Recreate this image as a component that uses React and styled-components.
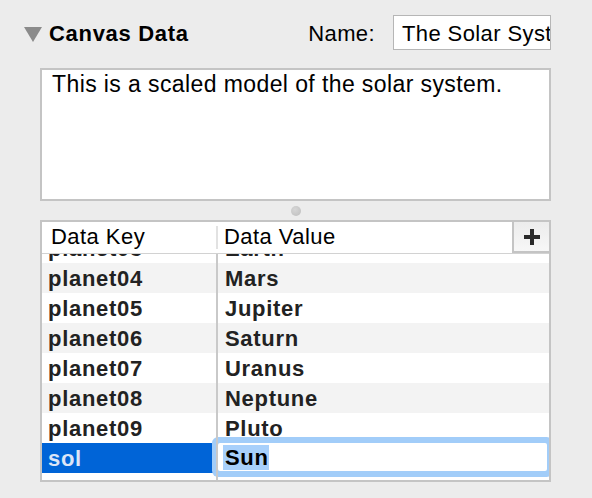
import React from "react";
import styled, { createGlobalStyle } from "styled-components";

const Global = createGlobalStyle`
  html, body { margin: 0; padding: 0; background: #ececec; }
  body { font-family: "Liberation Sans", Arial, Helvetica, sans-serif; }
  * { box-sizing: border-box; }
`;

const Page = styled.div`
  width: 592px;
  height: 498px;
  padding: 15px 41px 0 24px;
  background: #ececec;
`;

const HeaderRow = styled.div`
  display: flex;
  align-items: center;
  height: 35px;
`;

const Disclosure = styled.svg`
  width: 18px;
  height: 15px;
  margin-right: 7px;
  margin-top: 3px;
  flex: none;
`;

const Title = styled.div`
  font-weight: bold;
  font-size: 22px;
  letter-spacing: 0.7px;
  color: #000;
  margin-top: 3px;
`;

const Spacer = styled.div`
  flex: 1;
`;

const NameLabel = styled.div`
  font-size: 22px;
  letter-spacing: 0.4px;
  color: #000;
  margin-right: 18px;
  margin-top: 3px;
`;

const NameField = styled.div`
  width: 158px;
  height: 35px;
  border: 1px solid #b6b6b6;
  background: #fff;
  font-size: 22px;
  letter-spacing: 0.4px;
  line-height: 33px;
  padding: 1px 0 0 8px;
  white-space: nowrap;
  overflow: hidden;
  color: #000;
`;

const Description = styled.div`
  margin: 18px 0 0 16px;
  height: 133px;
  border: 2px solid #c4c4c4;
  background: #fff;
  font-size: 23px;
  letter-spacing: 0.4px;
  line-height: 28px;
  padding: 0 10px;
  color: #000;
`;

const Splitter = styled.div`
  margin-left: 16px;
  height: 19px;
  display: flex;
  align-items: center;
  justify-content: center;
`;

const SplitDot = styled.div`
  width: 10px;
  height: 10px;
  border-radius: 50%;
  background: radial-gradient(circle at 40% 35%, #d6d6d6, #bdbdbd);
  margin-top: 1px;
`;

const Table = styled.div`
  margin-left: 16px;
  height: 262px;
  border: 2px solid #c4c4c4;
  background: #fff;
  display: flex;
  flex-direction: column;
  position: relative;
`;

const TableHead = styled.div`
  display: grid;
  grid-template-columns: 174px 1fr 37px;
  height: 32px;
  border-bottom: 1px solid #d2d2d2;
  flex: none;
  position: relative;
  z-index: 3;
  background: #fff;
`;

const HeadCell = styled.div`
  font-size: 22px;
  letter-spacing: 0.45px;
  line-height: 30px;
  padding-left: ${p => p.$pad}px;
  color: #000;
  position: relative;
  ${p => p.$divider && `
    &::after {
      content: "";
      position: absolute;
      right: -2px;
      top: 4px;
      bottom: 4px;
      width: 2px;
      background: #e2e2e2;
    }
  `}
`;

const AddButton = styled.div`
  margin: -2px -2px 0 0;
  height: 33px;
  border: 2px solid #c4c4c4;
  background: linear-gradient(#ececec, #f7f7f7);
  display: flex;
  align-items: center;
  justify-content: center;
`;

const TableBody = styled.div`
  flex: 1;
  overflow: hidden;
  position: relative;
  &::after {
    content: "";
    position: absolute;
    left: 174px;
    top: 0;
    bottom: 0;
    width: 2px;
    background: #c9c9c9;
    z-index: 2;
  }
`;

const Rows = styled.div`
  margin-top: -21px;
`;

const Row = styled.div`
  display: grid;
  grid-template-columns: 176px 1fr;
  height: 30px;
  background: ${p => (p.$alt ? "#f3f3f3" : "#fff")};
  position: relative;
`;

const Cell = styled.div`
  font-size: 22px;
  font-weight: bold;
  letter-spacing: 0.7px;
  line-height: 29px;
  padding-top: 1px;
  color: ${p => (p.$selected ? "#dce5f7" : "#222")};
  background: ${p => (p.$selected ? "#0064d7" : "transparent")};
  padding-left: ${p => p.$pad}px;
  white-space: nowrap;
  overflow: hidden;
`;

const KeyCell = styled(Cell)`
  width: 174px;
`;

const EditField = styled.div`
  height: 28px;
  margin: 0 2px 0 0;
  background: #fff;
  border-radius: 2px;
  box-shadow: 0 0 0 6px #a2cdf9;
  font-size: 22px;
  font-weight: bold;
  letter-spacing: 0.7px;
  line-height: 28px;
  padding: 1px 0 0 5px;
  color: #000;
  position: relative;
  z-index: 1;
`;

const Highlight = styled.span`
  background: #a8d0fb;
  padding-left: 2px;
`;

const rows = [
  ["planet03", "Earth"],
  ["planet04", "Mars"],
  ["planet05", "Jupiter"],
  ["planet06", "Saturn"],
  ["planet07", "Uranus"],
  ["planet08", "Neptune"],
  ["planet09", "Pluto"],
];

export default function App() {
  return (
    <>
      <Global />
      <Page>
        <HeaderRow>
          <Disclosure viewBox="0 0 18 15">
            <polygon points="0,0 18,0 9,15" fill="#8b8b8b" />
          </Disclosure>
          <Title>Canvas Data</Title>
          <Spacer />
          <NameLabel>Name:</NameLabel>
          <NameField>The Solar System</NameField>
        </HeaderRow>
        <Description>This is a scaled model of the solar system.</Description>
        <Splitter>
          <SplitDot />
        </Splitter>
        <Table>
          <TableHead>
            <HeadCell $pad={9} $divider>Data Key</HeadCell>
            <HeadCell $pad={8}>Data Value</HeadCell>
            <AddButton>
              <svg width="16" height="16" viewBox="0 0 16 16">
                <rect x="0" y="6" width="16" height="4" fill="#2a2a2a" />
                <rect x="6" y="0" width="4" height="16" fill="#2a2a2a" />
              </svg>
            </AddButton>
          </TableHead>
          <TableBody>
            <Rows>
              {rows.map(([k, v], i) => (
                <Row key={k} $alt={i % 2 === 1}>
                  <KeyCell $pad={6}>{k}</KeyCell>
                  <Cell $pad={7}>{v}</Cell>
                </Row>
              ))}
              <Row>
                <KeyCell $pad={6} $selected>sol</KeyCell>
                <EditField>
                  <Highlight>Sun</Highlight>
                </EditField>
              </Row>
            </Rows>
          </TableBody>
        </Table>
      </Page>
    </>
  );
}
